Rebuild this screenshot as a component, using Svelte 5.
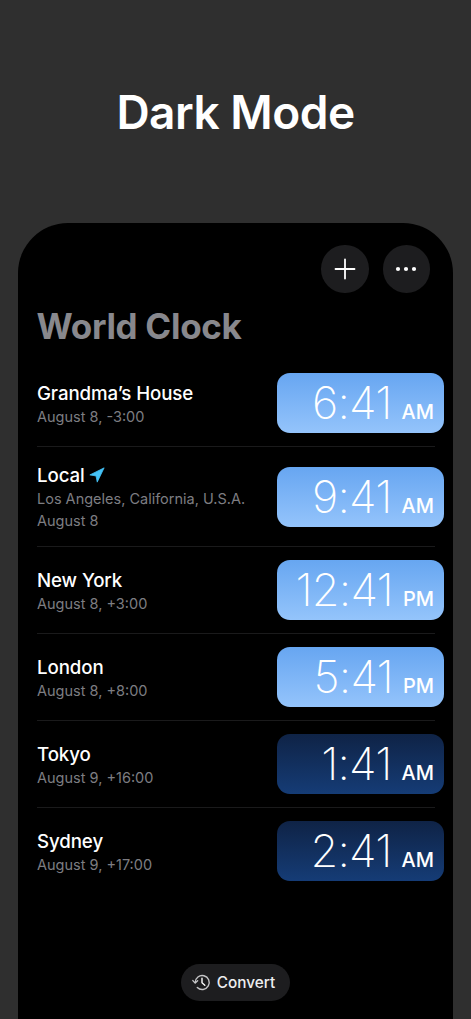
<script>
	const clocks = [
		{ name: 'Grandma’s House', sub: ['August 8, -3:00'], time: '6:41', ampm: 'AM', night: false },
		{ name: 'Local', here: true, sub: ['Los Angeles, California, U.S.A.', 'August 8'], time: '9:41', ampm: 'AM', night: false },
		{ name: 'New York', sub: ['August 8, +3:00'], time: '12:41', ampm: 'PM', night: false },
		{ name: 'London', sub: ['August 8, +8:00'], time: '5:41', ampm: 'PM', night: false },
		{ name: 'Tokyo', sub: ['August 9, +16:00'], time: '1:41', ampm: 'AM', night: true },
		{ name: 'Sydney', sub: ['August 9, +17:00'], time: '2:41', ampm: 'AM', night: true }
	];
</script>

<main class="page">
	<h1>Dark Mode</h1>

	<section class="phone">
		<div class="actions">
			<button class="round" aria-label="Add">
				<svg width="22" height="22" viewBox="0 0 22 22"><path d="M11 1.5v19M1.5 11h19" stroke="#fff" stroke-width="1.8" stroke-linecap="round" /></svg>
			</button>
			<button class="round" aria-label="More">
				<svg width="24" height="6" viewBox="0 0 24 6"><circle cx="4" cy="3" r="2.1" fill="#fff" /><circle cx="12" cy="3" r="2.1" fill="#fff" /><circle cx="20" cy="3" r="2.1" fill="#fff" /></svg>
			</button>
		</div>

		<h2>World Clock</h2>

		<ul class="list">
			{#each clocks as clock}
				<li class="row">
					<div class="info">
						<div class="name">
							{clock.name}
							{#if clock.here}
								<svg class="arrow" width="16" height="16" viewBox="0 0 15 15"><path d="M14.2 .8 .8 7.4l5.8 1 1.1 5.8z" fill="#45c2f7" stroke="#45c2f7" stroke-width=".7" stroke-linejoin="round" /></svg>
							{/if}
						</div>
						{#each clock.sub as line}
							<div class="sub">{line}</div>
						{/each}
					</div>
					<div class="pill" class:night={clock.night}>
						<span class="time">{clock.time}</span>
						<span class="ampm">{clock.ampm}</span>
					</div>
				</li>
			{/each}
		</ul>

		<button class="convert">
			<svg width="19" height="19" viewBox="0 0 19 19" fill="none" stroke="#c4c4c6" stroke-width="1.4" stroke-linecap="round" stroke-linejoin="round">
				<path d="M3.2 9.5a7 7 0 1 1 2.1 5" />
				<path d="M.9 7.6l2.3 2.5 2.4-2.4" />
				<path d="M10 5.2v4.6l2.8 2.4" stroke="#fff" />
			</svg>
			Convert
		</button>
	</section>
</main>

<style>
	:global(body) {
		margin: 0;
		background: #2f2f2f;
	}

	.page {
		height: 1019px;
		overflow: hidden;
		display: flex;
		flex-direction: column;
		font-family: Inter, 'Liberation Sans', sans-serif;
		color: #fff;
	}

	h1 {
		flex: none;
		margin: 0;
		padding-top: 84px;
		height: 223px;
		box-sizing: border-box;
		text-align: center;
		font-size: 46px;
		line-height: 56px;
		font-weight: 600;
		letter-spacing: -0.5px;
	}

	.phone {
		flex: 1;
		margin: 0 18px;
		background: #000;
		border-radius: 50px 50px 0 0;
		display: flex;
		flex-direction: column;
	}

	.actions {
		display: flex;
		justify-content: flex-end;
		gap: 14px;
		padding: 22px 23px 0 0;
	}

	.round {
		width: 47.5px;
		height: 47.5px;
		border-radius: 50%;
		border: 0;
		padding: 0;
		background: #1d1d1f;
		display: flex;
		align-items: center;
		justify-content: center;
	}

	h2 {
		margin: 12.5px 0 0 18.5px;
		font-size: 35px;
		line-height: 42px;
		font-weight: 700;
		color: #88888d;
		letter-spacing: -0.3px;
	}

	.list {
		list-style: none;
		margin: 13px 18px 0 19px;
		padding: 0;
	}

	.row {
		display: flex;
		align-items: center;
		justify-content: space-between;
		padding: 13px 0;
		border-bottom: 1px solid #1a1a1b;
	}

	.row:last-child {
		border-bottom: 0;
	}

	.info {
		padding: 4px 0 1px;
	}

	.name {
		display: flex;
		align-items: center;
		gap: 4px;
		font-size: 18.7px;
		line-height: 24px;
		font-weight: 500;
		letter-spacing: -0.1px;
	}

	.arrow {
		margin-top: -3px;
	}

	.sub {
		font-size: 14.5px;
		line-height: 22px;
		color: #7d7d82;
	}

	.pill {
		width: 167px;
		height: 60px;
		margin-right: -9px;
		flex: none;
		box-sizing: border-box;
		padding: 0 10px 0 0;
		border-radius: 13px;
		background: linear-gradient(#67a6f1, #94c4fb);
		display: flex;
		align-items: baseline;
		justify-content: flex-end;
		gap: 10px;
		line-height: 60px;
	}

	.pill.night {
		background: linear-gradient(#0f2346, #153c76);
	}

	.time {
		font-size: 45px;
		font-weight: 250;
		letter-spacing: -0.8px;
	}

	.ampm {
		font-size: 20px;
		font-weight: 500;
	}

	.convert {
		align-self: center;
		margin-top: 70px;
		width: 109px;
		height: 37px;
		border: 0;
		border-radius: 19px;
		background: #1d1d1f;
		color: #eeeeef;
		font: 500 15.3px Inter, 'Liberation Sans', sans-serif;
		display: flex;
		align-items: center;
		justify-content: center;
		gap: 6px;
		padding: 0 4px 0 0;
	}
</style>
